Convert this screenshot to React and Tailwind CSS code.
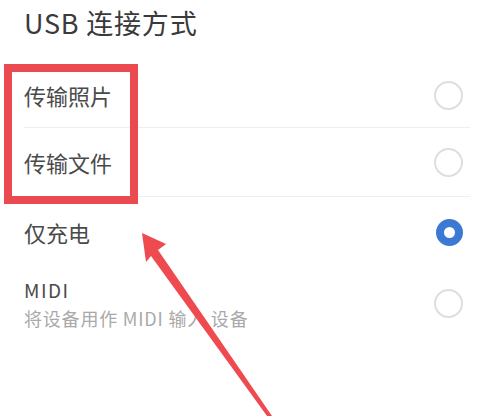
import React from "react";

const font = { fontFamily: '"Noto Sans CJK SC", "Noto Sans", sans-serif' };

function Radio({ checked }) {
  if (checked) {
    return (
      <div className="w-[27px] h-[27px] rounded-full border-[8px] border-[#3b79d2] bg-white shrink-0" />
    );
  }
  return <div className="w-[29px] h-[29px] rounded-full border-2 border-[#dedede] bg-white shrink-0" />;
}

function Row({ title, sub, checked, divider, h }) {
  return (
    <div className={`flex items-center justify-between pr-[7px] ${h} ${divider ? "border-b border-[#eeeeee]" : ""}`}>
      <div className="flex flex-col">
        <span className={sub ? "text-[19px] leading-[26px] tracking-[1.5px] text-[#4a4a4a]" : "text-[22px] leading-[28px] text-[#4a4a4a]"}>{title}</span>
        {sub && <span className="text-[18px] leading-[24px] tracking-[0.8px] text-[#a9a9a9] mt-[3px]">{sub}</span>}
      </div>
      <Radio checked={checked} />
    </div>
  );
}

export default function App() {
  return (
    <div className="relative w-[494px] h-[416px] bg-white overflow-hidden" style={font}>
      <div className="h-[63px] pl-6 pt-[6px]">
        <h1 className="text-[27px] leading-[34px] text-[#3a3a3a] tracking-[0.8px]">USB 连接方式</h1>
      </div>
      <div className="flex flex-col ml-6 mr-[24px]">
        <Row title="传输照片" divider h="h-[65px]" />
        <Row title="传输文件" divider h="h-[69px]" />
        <Row title="仅充电" checked h="h-[70px]" />
        <Row title="MIDI" sub="将设备用作 MIDI 输入 设备" h="h-[72px]" />
      </div>

      <div className="absolute left-[4px] top-[64px] w-[134px] h-[140px] border-[8px] border-[#ea4a50]" />

      <svg className="absolute left-0 top-0" width="494" height="416" viewBox="0 0 494 416">
        <polygon
          points="142,233 166,244 158,250 272,416 267,416 151,256 146,262"
          fill="#ee4a4f"
        />
      </svg>
    </div>
  );
}
